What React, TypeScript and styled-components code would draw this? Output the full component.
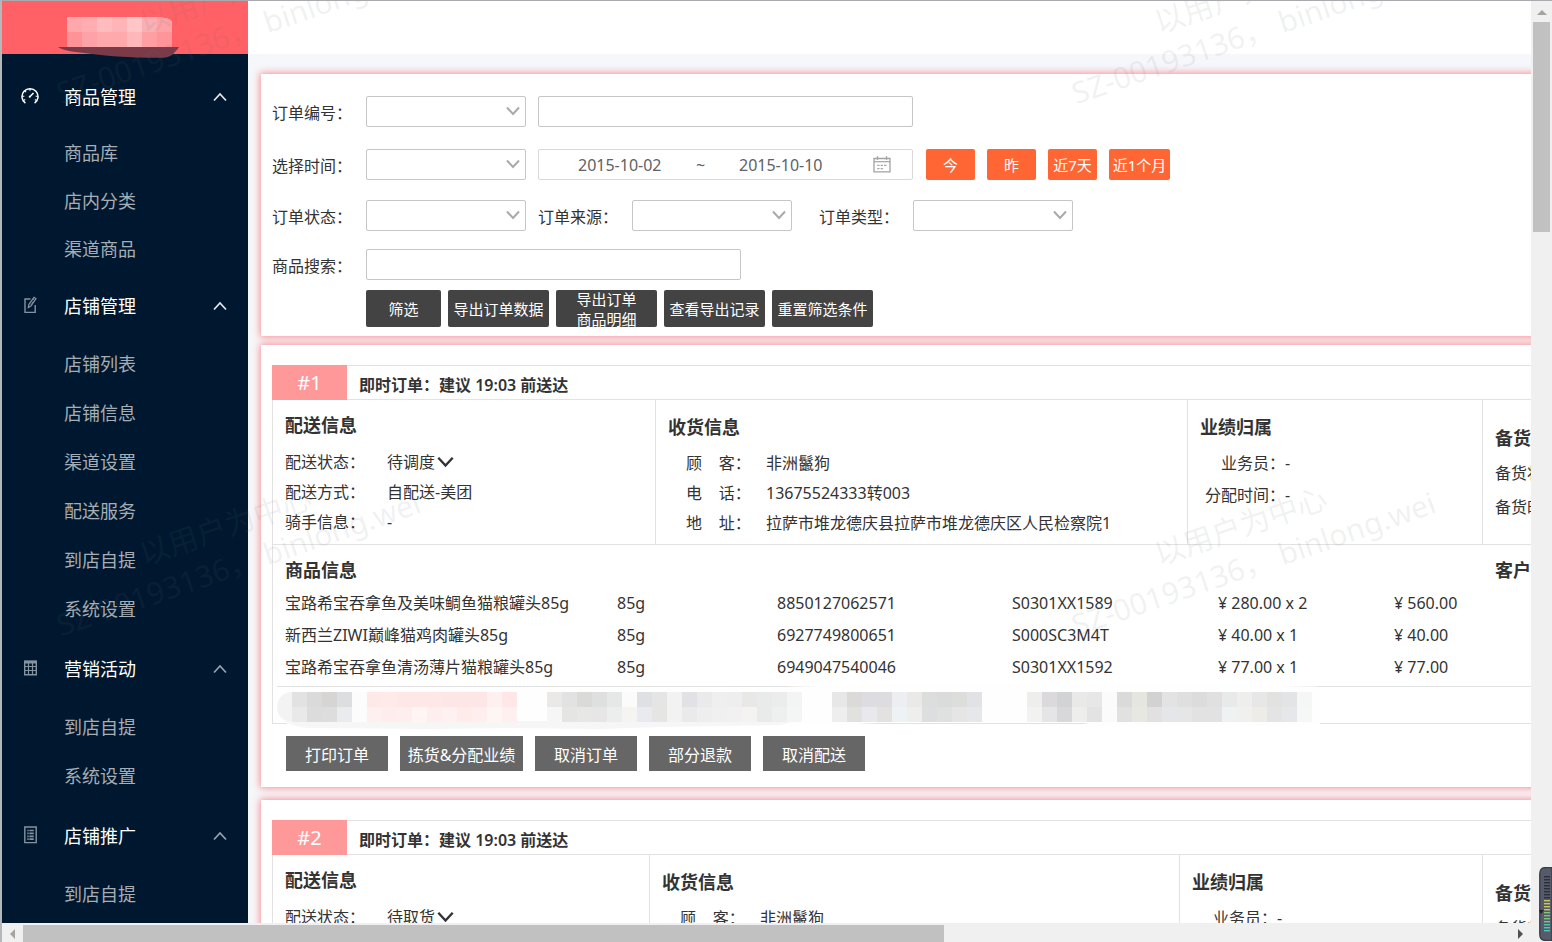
import React from "react";
import styled, { createGlobalStyle } from "styled-components";

const GlobalStyle = createGlobalStyle`
  *, *::before, *::after { box-sizing: border-box; }
  body {
    margin: 0;
    overflow: hidden;
    color: #333;
    font-family: "Noto Sans", "Noto Sans CJK SC", sans-serif;
    font-size: 16px;
  }
  button, input, select { font: inherit; color: inherit; }
  ul, dl, dd, h2, h3 { margin: 0; padding: 0; list-style: none; }
`;

const Frame = styled.div`
  position: relative;
  display: grid;
  grid-template: minmax(0, 1fr) 19px / minmax(0, 1fr) 21px;
  height: 100vh;
  border-top: 1px solid #aaaaae;
  border-left: 2px solid #b4b8bb;
  background: #f0f0f0;
`;

const Viewport = styled.div`
  position: relative;
  display: flex;
  overflow: hidden;
  background: #f5f7fa;
`;

/* ---------- sidebar ---------- */

const Sidebar = styled.aside`
  flex: 0 0 246px;
  background: #00182f;
`;

const Brand = styled.div`
  height: 53px;
  padding: 16px 0 0 56px;
  background: #ff6166;
  svg { display: block; overflow: visible; }
`;

const Nav = styled.nav`
  display: flex;
  flex-direction: column;
  gap: 1px;
  padding-top: 11px;
`;

const SectionHead = styled.button`
  display: grid;
  grid-template-columns: 62px 1fr 35px;
  align-items: center;
  width: 100%;
  height: 64px;
  padding: 0;
  border: 0;
  background: none;
  color: #fff;
  font-size: 18px;
  line-height: 24px;
  text-align: left;
`;

const HeadIcon = styled.span<{ $bright?: boolean }>`
  display: flex;
  justify-content: center;
  width: 56px;
  padding-bottom: 3px;
  color: ${(p) => (p.$bright ? "#fff" : "#8593a0")};
`;

const Fold = styled.span<{ $bright?: boolean }>`
  display: flex;
  color: ${(p) => (p.$bright ? "#e6e8ea" : "#98a3ad")};
`;

const SectionList = styled.ul<{ $compact?: boolean }>`
  padding: ${(p) => (p.$compact ? "0" : "2px 0")};
  a {
    display: block;
    padding-left: 62px;
    color: #a6adb4;
    font-size: 18px;
    line-height: ${(p) => (p.$compact ? "48px" : "49px")};
    text-decoration: none;
  }
`;

/* ---------- main column ---------- */

const Main = styled.main`
  flex: 1;
  min-width: 0;
  overflow: hidden;
`;

const TopBar = styled.header`
  height: 53px;
  background: #fff;
`;

const Canvas = styled.div`
  display: flex;
  flex-direction: column;
  min-width: 1660px;
  padding: 20px 0 0 13px;
`;

const Card = styled.section<{ $gap: number }>`
  margin-bottom: ${(p) => p.$gap}px;
  background: #fff;
  box-shadow: 0 0 7px 1px rgba(255, 85, 90, 0.65);
`;

/* ---------- filter form ---------- */

const FilterForm = styled.form`
  padding: 22px 11px 9px;
`;

const FilterRow = styled.div<{ $after: number }>`
  display: flex;
  align-items: center;
  gap: 12px;
  margin-bottom: ${(p) => p.$after}px;
`;

const Field = styled.div<{ $before?: number }>`
  display: flex;
  align-items: center;
  margin-left: ${(p) => p.$before || 0}px;
  label {
    width: 94px;
    padding-top: 3px;
    line-height: 28px;
  }
`;

const SelectBox = styled.span`
  position: relative;
  display: block;
  width: 160px;
  height: 31px;
  select {
    appearance: none;
    display: block;
    width: 100%;
    height: 100%;
    padding: 0 28px 0 8px;
    border: 1px solid #c6c6c6;
    border-radius: 2px;
    background: #fff;
  }
  svg {
    position: absolute;
    top: 10px;
    right: 5px;
    color: #aaa;
    pointer-events: none;
  }
`;

const TextInput = styled.input`
  width: 375px;
  height: 31px;
  padding: 0 8px;
  border: 1px solid #c6c6c6;
  border-radius: 2px;
  background: #fff;
`;

const DateRange = styled.div`
  display: flex;
  align-items: center;
  width: 375px;
  height: 31px;
  padding-left: 39px;
  border: 1px solid #d9d9d9;
  border-radius: 2px;
  color: #606266;
  input {
    width: 88px;
    height: 24px;
    padding: 0;
    border: 0;
    background: none;
  }
  span {
    width: 73px;
    padding-right: 4px;
    text-align: center;
  }
  svg { margin-left: 46px; }
`;

const QuickRanges = styled.div`
  display: flex;
  gap: 12px;
  padding-left: 1px;
`;

const QuickButton = styled.button<{ $wide?: boolean }>`
  width: ${(p) => (p.$wide ? 61 : 49)}px;
  height: 31px;
  padding: 0;
  border: 0;
  border-radius: 2px;
  background: #ff6633;
  color: #fff;
  font-size: 15px;
  line-height: 20px;
`;

const FilterActions = styled.div`
  display: flex;
  gap: 7px;
  padding-left: 94px;
`;

const DarkButton = styled.button<{ $narrow?: boolean }>`
  width: ${(p) => (p.$narrow ? 75 : 101)}px;
  height: 37px;
  padding: 0;
  border: 0;
  border-radius: 2px;
  background: #434343;
  color: #fff;
  font-size: 15px;
  line-height: 20px;
  display: flex;
  align-items: center;
  justify-content: center;
`;

/* ---------- orders ---------- */

const OrderBody = styled.div`
  padding: 20px 0 16px 11px;
`;

const OrderHead = styled.div`
  display: flex;
  height: 35px;
  border: solid #e2e2e2;
  border-width: 1px 0;
  h2 {
    padding-left: 12px;
    font-size: 16px;
    font-weight: 600;
    line-height: 38px;
  }
`;

const Badge = styled.span`
  width: 75px;
  margin: -1px 0;
  background: #ff9999;
  color: #fff;
  font-size: 20px;
  line-height: 36px;
  text-align: center;
`;

const OrderBox = styled.div`
  border: solid #e2e2e2;
  border-width: 0 0 1px 1px;
`;

const InfoRow = styled.div`
  display: flex;
  height: 145px;
  border-bottom: 1px solid #e2e2e2;
`;

const InfoColumn = styled.div<{ $width?: number; $top: number }>`
  flex: ${(p) => (p.$width ? `0 0 ${p.$width}px` : "1")};
  padding: ${(p) => p.$top}px 0 0 12px;
  border-right: ${(p) => (p.$width ? "1px solid #e2e2e2" : "0")};
`;

const Title = styled.h3`
  font-size: 18px;
  font-weight: 600;
  line-height: 24px;
`;

const InfoList = styled.dl<{
  $gap: number;
  $row: number;
  $label: number;
  $indent?: number;
  $right?: boolean;
}>`
  padding: ${(p) => p.$gap}px 0 0 ${(p) => p.$indent || 0}px;
  line-height: ${(p) => p.$row}px;
  white-space: pre;
  div { display: flex; }
  dt {
    width: ${(p) => p.$label}px;
    text-align: ${(p) => (p.$right ? "right" : "left")};
  }
`;

const StatusButton = styled.button`
  display: flex;
  align-items: center;
  gap: 2px;
  padding: 0;
  border: 0;
  background: none;
  line-height: inherit;
`;

const Products = styled.div`
  display: flex;
  height: 141px;
  padding: 13px 0 0 12px;
`;

const ProductMain = styled.div`
  flex: 0 0 1210px;
`;

const ProductTable = styled.table`
  width: 100%;
  margin-top: 5px;
  border-collapse: collapse;
  table-layout: fixed;
  td {
    height: 32px;
    padding: 0;
    line-height: 24px;
    white-space: nowrap;
  }
`;

const Summary = styled.div`
  height: 37px;
  margin-left: 4px;
  border-top: 1px solid #e2e2e2;
  svg { display: block; overflow: visible; }
`;

const OrderActions = styled.div`
  display: flex;
  gap: 12px;
  padding: 12px 0 0 14px;
`;

const ActionButton = styled.button<{ $wide?: boolean }>`
  width: ${(p) => (p.$wide ? 123 : 102)}px;
  height: 35px;
  padding: 2px 0 0;
  border: 0;
  background: #666;
  color: #fff;
  line-height: 24px;
`;

/* ---------- watermark ---------- */

const WatermarkLayer = styled.div`
  position: absolute;
  inset: 0;
  overflow: hidden;
  pointer-events: none;
`;

const Mark = styled.div<{ $x: number; $y: number }>`
  position: absolute;
  left: ${(p) => p.$x}px;
  top: ${(p) => p.$y}px;
  width: 384px;
  margin: -40px 0 0 -192px;
  color: rgba(100, 115, 110, 0.1);
  font-size: 30px;
  line-height: 40px;
  text-align: center;
  white-space: nowrap;
  transform: rotate(-19deg);
`;

/* ---------- scroll bars ---------- */

const VerticalBar = styled.div`
  display: flex;
  flex-direction: column;
  align-items: center;
  padding-top: 9px;
  gap: 6px;
`;

const VerticalThumb = styled.div`
  width: 17px;
  height: 23%;
  background: #c1c1c1;
`;

const HorizontalBar = styled.div`
  display: flex;
  align-items: center;
  justify-content: space-between;
  padding: 2px 7px 0 8px;
`;

const HorizontalTrack = styled.div`
  flex: 1;
  height: 17px;
  margin: 0 10px 0 7px;
  div {
    width: 62%;
    height: 17px;
    background: #c1c1c1;
  }
`;

const Meter = styled.div`
  position: absolute;
  right: 0;
  bottom: 1px;
  svg { display: block; }
`;

/* ---------- drawings ---------- */

const Chevron = ({
  up,
  w = 14,
  h = 10,
  weight = 2,
}: {
  up?: boolean;
  w?: number;
  h?: number;
  weight?: number;
}) => (
  <svg width={w} height={h} viewBox="0 0 14 10" fill="none" stroke="currentColor" strokeWidth={weight} aria-hidden>
    <path d={up ? "M1 8.5 7 2l6 6.5" : "M1 1.5 7 8l6-6.5"} />
  </svg>
);

const GaugeIcon = () => (
  <svg width="18" height="18" viewBox="0 0 18 18" fill="none" stroke="currentColor" strokeWidth="1.5" aria-hidden>
    <path d="M4.4 16.2A8 8 0 1 1 13.6 16.2" />
    <path d="M9 1.5v2.3M3.6 3.8l1.5 1.4M1.3 9.3h2M14.7 9.3h2M2.6 13.4l1.6-.8M15.4 13.4l-1.6-.8" strokeWidth="1.1" />
    <path d="M8.8 9.8 12.5 6" />
    <circle cx="8.7" cy="9.8" r="1" fill="currentColor" stroke="none" />
  </svg>
);

const EditIcon = () => (
  <svg width="13" height="18" viewBox="0 0 13 18" fill="none" stroke="currentColor" strokeWidth="1.2" aria-hidden>
    <path d="M6.5 3H1v13.4h10.2V9" strokeWidth="1.4" />
    <path d="m4.3 11.6.5-3L10 1.3l2 1.4L6.9 10z" />
    <path d="m8.8 3 2 1.4M6.9 9l2.8-4" strokeWidth=".8" />
  </svg>
);

const GridIcon = () => (
  <svg width="13" height="16" viewBox="0 0 13 16" fill="none" stroke="currentColor" aria-hidden>
    <path d="M.7 1.5h11.6v13.3H.7z" strokeWidth="1.4" />
    <path d="M0 2h13" strokeWidth="3" />
    <path d="M0 6.500h13M0 10.500h13M4.500 2v13M8.500 2v13" strokeWidth="1.200" />
  </svg>
);

const DocIcon = () => (
  <svg width="13" height="18" viewBox="0 0 13 18" fill="none" stroke="currentColor" aria-hidden>
    <path d="M.8 1h11.4v15.6H.8z" strokeWidth="1.4" />
    <path d="M3.3 4.5h1.4M3.3 7.4h1.4M3.3 10.3h1.4M3.3 13.2h1.4M5.4 4.5h4.3M5.4 7.4h4.3M5.4 10.3h4.3M5.4 13.2h4.3" strokeWidth="1.700" />
  </svg>
);

const CalendarIcon = () => (
  <svg width="18" height="17" viewBox="0 0 18 17" fill="none" stroke="#a3a3a3" aria-hidden>
    <path d="M1 2.5h16v13.4H1z" strokeWidth="1.3" />
    <path d="M1 5.7h16" strokeWidth="1.2" />
    <path d="M4.5.3v3.4M13.5.3v3.4" strokeWidth="1.4" />
    <path d="M4.3 9.4h2.2M7.7 9.4h2.2M11.1 9.4h2.4M4.3 12.7h2.2M7.7 12.7h2.2" strokeWidth="1.2" />
  </svg>
);

const Arrow = ({ d, color = "#a3a3a3", w, h }: { d: string; color?: string; w: number; h: number }) => (
  <svg width={w} height={h} viewBox={`0 0 ${w} ${h}`} fill={color} aria-hidden>
    <path d={d} />
  </svg>
);

const BRAND_TILES = [
  ["#ffa8ac", "#ff9297"],
  ["#ffadb1", "#ffa2a7"],
  ["#ffbcbf", "#ffa9ad"],
  ["#ffb5b8", "#ffa9ad"],
  ["#ffc6c8", "#ffb7ba"],
  ["#fbafb4", "#ff9fa4"],
  ["#ffa2a6", "#ff9499"],
];

const BrandMosaic = () => (
  <svg width="122" height="42" viewBox="0 0 122 42" aria-hidden>
    <path d="M0 30h121c-5 7-9 10.500-16 10.800C76 41 45 39 24 35.800 12 34.500 4 33 0 30z" fill="#7b3a48" />
    {BRAND_TILES.map(([a, b], i) => (
      <g key={i} shapeRendering="crispEdges">
        <path d={i === 6 ? "M99 0c8 .4 12 1 15 4v11H99z" : `M${9 + i * 15} 0h15v15h-15z`} fill={a} />
        <rect x={9 + i * 15} y="15" width="15" height="15" fill={b} />
      </g>
    ))}
  </svg>
);

/* runs of 15px tiles: [start, upper colours, lower colours] */
const SUMMARY_RUNS: [number, string[], string[]][] = [
  [15, ["e2e2e2", "dadada", "d6d5d3", "dcdee0", "fcfcfc"], ["e9e9e9", "dcdcdc", "dddddd", "e9ebee", "fcfcfc"]],
  [
    90,
    ["ffe8e8", "ffe9e9", "ffe6e7", "ffe6e7", "ffe7e7", "ffe6e6", "ffe6e6", "ffe6e6", "fff0f0", "ffe7e7"],
    ["fff0f0", "ffecec", "ffeeee", "fff5f3", "ffeeee", "fff1f1", "ffebea", "ffeeee", "fff6f4", "fff0f0"],
  ],
  [
    270,
    ["eae9e8", "e2e2e2", "dadad9", "dee0df", "e5e8e7", "fafbfa", "dfe0e4", "e4e5e4", "f2f2f2", "e2e2e6", "eaeaea", "efefef", "eeeeee", "e8e8e6", "e9ebea", "ebedec", "f3f5f4"],
    ["f6f6f6", "e5e5e4", "e7e7e7", "e6e6e6", "ebeeed", "f5f4f3", "e8eaef", "e5e5e4", "f2f2f2", "eaeaea", "eeeeee", "f0f0f0", "f1f1f1", "f5f3f2", "e9ebea", "eef0ef", "f3f6f5"],
  ],
  [
    555,
    ["e7e7e8", "dcdad9", "dddce0", "dddcde", "eceef1", "eae9e8", "dcdedd", "d9dcda", "dcdedc", "e1e2e5"],
    ["eeeeee", "e1e1df", "e9e9ed", "e3e2e1", "edf2f4", "eeeeec", "dddedf", "dee1df", "e5e5e5", "e6e7ea"],
  ],
  [
    750,
    ["eeeeed", "dbd9db", "d2d3d5", "e9e9e7", "e7e7e7", "fbfbfb", "dadada", "e5e6e0", "d2d2d2", "e3e3e3", "dfdfdf", "dcdcdc", "e0e0e0", "e7eae9", "eeeeec", "e7e7e7", "e2e2e0", "e3e4e6", "f5f7f6"],
    ["f2f2f1", "e5e5e8", "d8d8da", "eeeeec", "e3e3e3", "fbfbfb", "e1e1e0", "e8e8e2", "e1e1e1", "e5e6e9", "e6e6e6", "e2e2e2", "e2e2e2", "eff2f2", "f0f0ee", "eeece6", "e4e4e4", "e6e7ea", "f5f8f7"],
  ],
];

const SummaryMosaic = () => (
  <svg width="1045" height="36" viewBox="0 0 1045 36" aria-hidden>
    <path
      d="M0 18C0 9 5 4 15 3C200 2 420 1 510 0C560-3 980-3 1043 0v38H815l-8-2H600L560 38 400 40 20 41C8 38 0 30 0 18z"
      fill="#fefefe"
    />
    <path d="M15 5C5 6 0 12 0 20s5 14 15 15.500z" fill="#f3f3f3" />
    <path d="M8 34h510l-14 4-120 2-60 2-90-1-80 1-120-1C24 41 14 38 8 34z" fill="#f6f6f6" />
    {SUMMARY_RUNS.map(([start, top, bottom]) =>
      top.map((color, i) => (
        <g key={start + i * 15} shapeRendering="crispEdges">
          <rect x={start + i * 15} y="5" width="15" height="15" fill={`#${color}`} />
          <rect x={start + i * 15} y="20" width="15" height="15" fill={`#${bottom[i]}`} />
        </g>
      ))
    )}
  </svg>
);

const LevelMeter = () => (
  <svg width="13" height="74" viewBox="0 0 13 74" aria-hidden>
    <path d="M13 .5H7Q.8.5.8 7v60q0 6.500 6.200 6.500h6z" fill="#565b6b" stroke="#3a3d49" strokeWidth="1.4" />
    {Array.from({ length: 19 }, (_, i) => (
      <rect
        key={i}
        x="5"
        y={9 + i * 3}
        width="6"
        height="1.400"
        fill={i < 8 ? "#2c2f39" : i < 12 ? "#c9c951" : i < 16 ? "#7fc47a" : "#4ac7b0"}
      />
    ))}
    <path d="M0 43h5l-3 4z" fill="#222" />
  </svg>
);

/* ---------- data ---------- */

const SECTIONS = [
  { name: "商品管理", icon: <GaugeIcon />, bright: true, compact: true, items: ["商品库", "店内分类", "渠道商品"] },
  {
    name: "店铺管理",
    icon: <EditIcon />,
    foldBright: true,
    items: ["店铺列表", "店铺信息", "渠道设置", "配送服务", "到店自提", "系统设置"],
  },
  { name: "营销活动", icon: <GridIcon />, items: ["到店自提", "系统设置"] },
  { name: "店铺推广", icon: <DocIcon />, items: ["到店自提"] },
];

const PRODUCT_COLUMNS = [332, 160, 235, 206, 176, 101];

type Line = [string, string];

interface OrderData {
  no: number;
  widths: number[];
  status: string;
  delivery: Line[];
  receiver: Line[];
  sales: Line[];
  stock: string[];
  products: string[][];
}

const ORDERS: OrderData[] = [
  {
    no: 1,
    widths: [383, 532, 295],
    status: "待调度",
    delivery: [
      ["配送方式：", "自配送-美团"],
      ["骑手信息：", "-"],
    ],
    receiver: [
      ["顾    客：", "非洲鬣狗"],
      ["电    话：", "13675524333转003"],
      ["地    址：", "拉萨市堆龙德庆县拉萨市堆龙德庆区人民检察院1"],
    ],
    sales: [
      ["业务员：", "-"],
      ["分配时间：", "-"],
    ],
    stock: ["备货状态：", "备货时间："],
    products: [
      ["宝路希宝吞拿鱼及美味鲷鱼猫粮罐头85g", "85g", "8850127062571", "S0301XX1589", "¥ 280.00 x 2", "¥ 560.00"],
      ["新西兰ZIWI巅峰猫鸡肉罐头85g", "85g", "6927749800651", "S000SC3M4T", "¥ 40.00 x 1", "¥ 40.00"],
      ["宝路希宝吞拿鱼清汤薄片猫粮罐头85g", "85g", "6949047540046", "S0301XX1592", "¥ 77.00 x 1", "¥ 77.00"],
    ],
  },
  {
    no: 2,
    widths: [377, 530, 303],
    status: "待取货",
    delivery: [],
    receiver: [["顾    客：", "非洲鬣狗"]],
    sales: [["业务员：", "-"]],
    stock: ["备货状态："],
    products: [],
  },
];

/* ---------- parts ---------- */

const Select = ({ id }: { id: string }) => (
  <SelectBox>
    <select id={id} defaultValue="">
      <option value="" />
    </select>
    <Chevron w={16} />
  </SelectBox>
);

const Filters = () => (
  <FilterForm onSubmit={(e) => e.preventDefault()}>
    <FilterRow $after={22}>
      <Field>
        <label htmlFor="order-no">订单编号：</label>
        <Select id="order-no" />
      </Field>
      <TextInput type="text" aria-label="订单编号" />
    </FilterRow>
    <FilterRow $after={20}>
      <Field>
        <label htmlFor="time-kind">选择时间：</label>
        <Select id="time-kind" />
      </Field>
      <DateRange>
        <input aria-label="开始日期" defaultValue="2015-10-02" />
        <span>~</span>
        <input aria-label="结束日期" defaultValue="2015-10-10" />
        <CalendarIcon />
      </DateRange>
      <QuickRanges>
        <QuickButton type="button">今</QuickButton>
        <QuickButton type="button">昨</QuickButton>
        <QuickButton type="button">近7天</QuickButton>
        <QuickButton type="button" $wide>近1个月</QuickButton>
      </QuickRanges>
    </FilterRow>
    <FilterRow $after={18}>
      <Field>
        <label htmlFor="order-state">订单状态：</label>
        <Select id="order-state" />
      </Field>
      <Field>
        <label htmlFor="order-source">订单来源：</label>
        <Select id="order-source" />
      </Field>
      <Field $before={15}>
        <label htmlFor="order-type">订单类型：</label>
        <Select id="order-type" />
      </Field>
    </FilterRow>
    <FilterRow $after={10}>
      <Field>
        <label htmlFor="goods">商品搜索：</label>
        <TextInput id="goods" type="text" />
      </Field>
    </FilterRow>
    <FilterActions>
      <DarkButton type="submit" $narrow>筛选</DarkButton>
      <DarkButton type="button">导出订单数据</DarkButton>
      <DarkButton type="button">
        导出订单
        <br />
        商品明细
      </DarkButton>
      <DarkButton type="button">查看导出记录</DarkButton>
      <DarkButton type="button">重置筛选条件</DarkButton>
    </FilterActions>
  </FilterForm>
);

const Lines = ({ lines }: { lines: Line[] }) => (
  <>
    {lines.map(([label, value]) => (
      <div key={label}>
        <dt>{label}</dt>
        <dd>{value}</dd>
      </div>
    ))}
  </>
);

const Order = ({ order }: { order: OrderData }) => (
  <OrderBody>
    <OrderHead>
      <Badge>#{order.no}</Badge>
      <h2>即时订单：建议 19:03 前送达</h2>
    </OrderHead>
    <OrderBox>
      <InfoRow>
        <InfoColumn $width={order.widths[0]} $top={13}>
          <Title>配送信息</Title>
          <InfoList $gap={10} $row={30} $label={102}>
            <div>
              <dt>配送状态：</dt>
              <dd>
                <StatusButton type="button">
                  {order.status}
                  <Chevron w={17} h={12} />
                </StatusButton>
              </dd>
            </div>
            <Lines lines={order.delivery} />
          </InfoList>
        </InfoColumn>
        <InfoColumn $width={order.widths[1]} $top={15}>
          <Title>收货信息</Title>
          <InfoList $gap={9} $row={30} $label={80} $indent={18}>
            <Lines lines={order.receiver} />
          </InfoList>
        </InfoColumn>
        <InfoColumn $width={order.widths[2]} $top={15}>
          <Title>业绩归属</Title>
          <InfoList $gap={8} $row={32} $label={85} $right>
            <Lines lines={order.sales} />
          </InfoList>
        </InfoColumn>
        <InfoColumn $top={26}>
          <Title>备货信息</Title>
          <InfoList $gap={6} $row={34} $label={102}>
            {order.stock.map((label) => (
              <div key={label}>
                <dt>{label}</dt>
              </div>
            ))}
          </InfoList>
        </InfoColumn>
      </InfoRow>
      {order.products.length > 0 && (
        <>
          <Products>
            <ProductMain>
              <Title>商品信息</Title>
              <ProductTable>
                <colgroup>
                  {PRODUCT_COLUMNS.map((w, i) => (
                    <col key={i} width={w} />
                  ))}
                </colgroup>
                <tbody>
                  {order.products.map((row) => (
                    <tr key={row[2]}>
                      {row.map((cell, i) => (
                        <td key={i}>{cell}</td>
                      ))}
                    </tr>
                  ))}
                </tbody>
              </ProductTable>
            </ProductMain>
            <Title>客户备注</Title>
          </Products>
          <Summary>
            <SummaryMosaic />
          </Summary>
        </>
      )}
    </OrderBox>
    {order.products.length > 0 && (
      <OrderActions>
        <ActionButton type="button">打印订单</ActionButton>
        <ActionButton type="button" $wide>拣货&amp;分配业绩</ActionButton>
        <ActionButton type="button">取消订单</ActionButton>
        <ActionButton type="button">部分退款</ActionButton>
        <ActionButton type="button">取消配送</ActionButton>
      </OrderActions>
    )}
  </OrderBody>
);

const MARKS = [
  [230, 12],
  [1245, 12],
  [230, 544],
  [1245, 544],
];

export default function App() {
  return (
    <>
      <GlobalStyle />
      <Frame>
        <Viewport>
          <Sidebar>
            <Brand>
              <BrandMosaic />
            </Brand>
            <Nav>
              {SECTIONS.map((s) => (
                <div key={s.name}>
                  <SectionHead type="button" aria-expanded>
                    <HeadIcon $bright={s.bright}>{s.icon}</HeadIcon>
                    {s.name}
                    <Fold $bright={s.bright || s.foldBright}>
                      <Chevron up weight={1.7} />
                    </Fold>
                  </SectionHead>
                  <SectionList $compact={s.compact}>
                    {s.items.map((item) => (
                      <li key={item}>
                        <a href="#">{item}</a>
                      </li>
                    ))}
                  </SectionList>
                </div>
              ))}
            </Nav>
          </Sidebar>
          <Main>
            <TopBar />
            <Canvas>
              <Card $gap={9}>
                <Filters />
              </Card>
              {ORDERS.map((o) => (
                <Card key={o.no} $gap={13}>
                  <Order order={o} />
                </Card>
              ))}
            </Canvas>
          </Main>
          <WatermarkLayer aria-hidden>
            {MARKS.map(([x, y]) => (
              <Mark key={`${x}-${y}`} $x={x} $y={y}>
                以用户为中心
                <br />
                SZ-00193136， binlong.wei
              </Mark>
            ))}
          </WatermarkLayer>
        </Viewport>
        <VerticalBar>
          <Arrow d="M0 5 5 0l5 5z" w={10} h={6} />
          <VerticalThumb />
        </VerticalBar>
        <HorizontalBar>
          <Arrow d="M5 0 0 5l5 5z" w={6} h={10} />
          <HorizontalTrack>
            <div />
          </HorizontalTrack>
          <Arrow d="M0 0l5 5-5 5z" color="#505050" w={6} h={10} />
        </HorizontalBar>
        <Meter>
          <LevelMeter />
        </Meter>
      </Frame>
    </>
  );
}
